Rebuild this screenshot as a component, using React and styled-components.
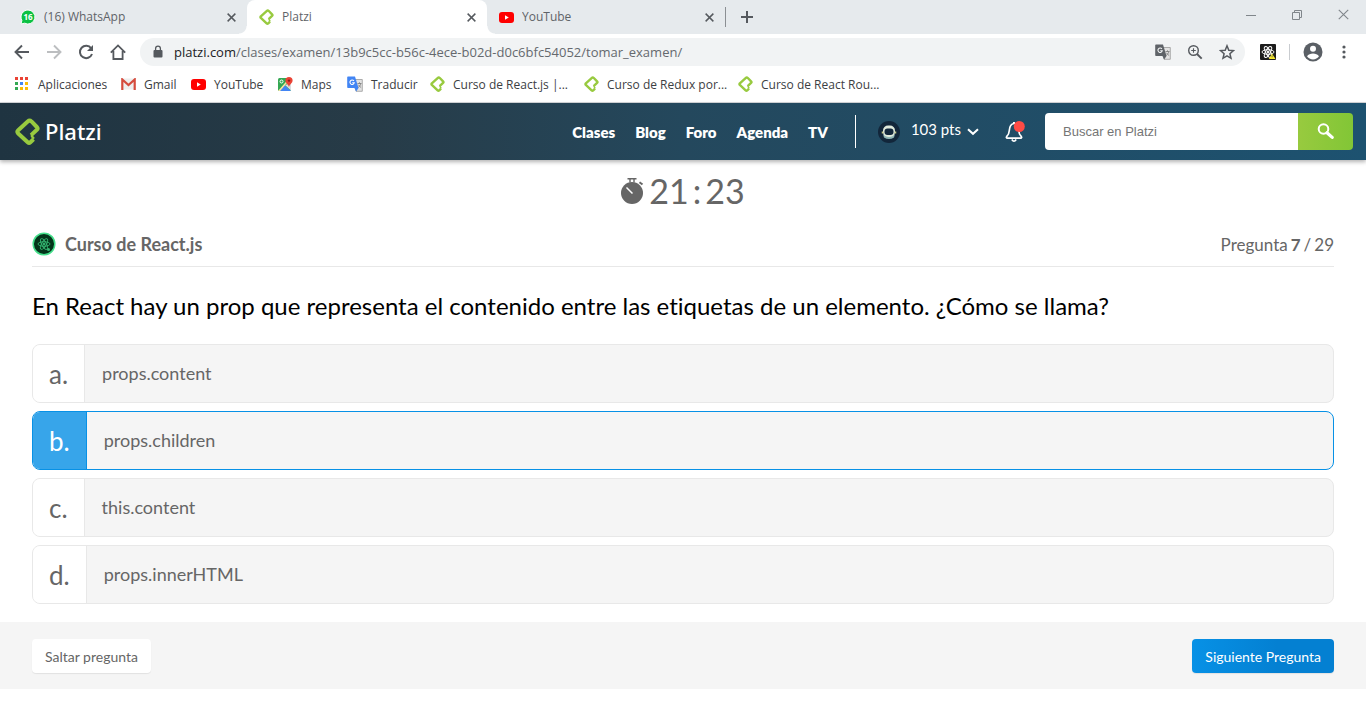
import React, { useState } from "react";
import styled, { createGlobalStyle, css } from "styled-components";

const GlobalStyle = createGlobalStyle`
  *, *::before, *::after { box-sizing: border-box; }
  body {
    margin: 0;
    background: #fff;
    font-family: Lato, "Liberation Sans", sans-serif;
    font-variant-ligatures: none;
  }
  a { color: inherit; text-decoration: none; }
  button, input { font: inherit; }
  button { border: 0; padding: 0; background: none; color: inherit; cursor: pointer; }
  svg { display: block; flex: none; }
`;

/* ---------- Browser window ---------- */

const Browser = styled.header`
  font-family: "Open Sans", "Noto Sans", sans-serif;
  border-bottom: 1px solid #d5d7da;
`;

const TabStrip = styled.div`
  display: flex;
  height: 34px;
  background: #e6eaed;
`;

const Tab = styled.div`
  display: flex;
  align-items: center;
  gap: 8px;
  flex: 0 1 240px;
  min-width: 0;
  padding: 0 8px 0 12px;
  font-size: 12px;
  color: #5f6368;
  ${(p) => p.$first && css`
    flex-basis: 247px;
    padding-left: 20px;
  `}
  ${(p) => p.$last && css`
    flex-basis: 238px;
  `}
  ${(p) => p.$active && css`
    position: relative;
    background: #fff;
    border-radius: 8px 8px 0 0;
    &::before, &::after {
      content: "";
      position: absolute;
      bottom: 0;
      width: 8px;
      height: 8px;
    }
    &::before {
      right: 100%;
      background: radial-gradient(circle at 0 0, transparent 7px, #fff 8px);
    }
    &::after {
      left: 100%;
      background: radial-gradient(circle at 100% 0, transparent 7px, #fff 8px);
    }
  `}
`;

const TabTitle = styled.span`
  flex: 1;
  padding-bottom: 1px;
  overflow: hidden;
  white-space: nowrap;
`;

const TabDivider = styled.span`
  width: 1px;
  height: 20px;
  margin-top: 7px;
  background: #8b8f93;
`;

const StripButton = styled.button`
  display: flex;
  align-items: center;
  justify-content: center;
  width: ${(p) => p.$width || 16}px;
  height: ${(p) => p.$height || 16}px;
  color: ${(p) => p.$color || "#55595e"};
`;

const WindowControls = styled.div`
  display: flex;
  margin-left: auto;
`;

const Toolbar = styled.div`
  display: flex;
  align-items: center;
  height: 36px;
  padding: 0 14px;
  color: #55595e;
`;

const NavButtons = styled.div`
  display: flex;
  gap: 16px;
  margin-right: 14px;
`;

const Address = styled.div`
  display: flex;
  flex: 1;
  align-items: center;
  height: 28px;
  padding: 0 10px 0 12px;
  border-radius: 14px;
  background: #f1f3f4;
`;

const AddressText = styled.span`
  flex: 1;
  margin-left: 10px;
  font-size: 13px;
  color: #65696e;
  white-space: nowrap;
  b { font-weight: 400; color: #202124; }
`;

const AddressActions = styled.div`
  display: flex;
  gap: 16px;
`;

const ToolbarEnd = styled.div`
  display: flex;
  align-items: center;
  gap: 13px;
  margin-left: 15px;
`;

const ToolbarDivider = styled.span`
  width: 1px;
  height: 16px;
  background: #c9ccd0;
`;

const Bookmarks = styled.nav`
  display: flex;
  align-items: center;
  height: 32px;
  padding: 0 0 4px 14px;
  font-size: 12px;
  color: #3c4043;
`;

const Bookmark = styled.a`
  display: flex;
  align-items: center;
  gap: 8px;
  width: ${(p) => p.$width}px;
  white-space: nowrap;
`;

/* ---------- Platzi bar ---------- */

const SiteBar = styled.div`
  display: flex;
  align-items: center;
  height: 57px;
  padding: 0 13px 0 15px;
  background: linear-gradient(90deg, #1f3441 0%, #273b47 27%, #24485d 50%, #1d5270 100%);
  box-shadow: 0 2px 4px rgba(0, 0, 0, 0.3);
  color: #fff;
`;

const Brand = styled.a`
  display: flex;
  align-items: center;
  gap: 5px;
  padding-bottom: 1px;
  font-family: "Noto Sans", sans-serif;
  font-size: 22px;
  line-height: 28px;
  font-weight: 500;
`;

const SiteNav = styled.nav`
  display: flex;
  gap: 20px;
  margin-left: auto;
  padding-top: 1px;
  font-size: 15px;
  font-weight: 800;
`;

const SiteDivider = styled.span`
  width: 1px;
  height: 33px;
  margin: 0 22px 0 27px;
  background: #fff;
`;

const Points = styled.button`
  display: flex;
  align-items: center;
  font-size: 15px;
  span { margin: 0 6px 5px 11px; }
`;

const Bell = styled.button`
  margin: 0 20px 0 26px;
`;

const Search = styled.form`
  display: flex;
  width: 308px;
  height: 37px;
  border-radius: 4px;
  overflow: hidden;
`;

const SearchInput = styled.input`
  flex: 1;
  min-width: 0;
  padding: 0 18px;
  border: 0;
  background: #fff;
  font-family: "Liberation Sans", sans-serif;
  font-size: 13px;
  color: #555;
  &::placeholder { color: #757575; opacity: 1; }
`;

const SearchButton = styled.button`
  display: flex;
  align-items: center;
  justify-content: center;
  width: 55px;
  background: linear-gradient(90deg, #98ca3f, #82c636);
`;

/* ---------- Exam ---------- */

const Exam = styled.main`
  padding: 10px 32px 18px;
  color: #666;
`;

const Timer = styled.div`
  display: flex;
  align-items: center;
  justify-content: center;
  gap: 5px;
  height: 40px;
  font-size: 34px;
`;

const ClockDigits = styled.span`
  display: flex;
  gap: 4px;
`;

const ExamHead = styled.div`
  display: flex;
  align-items: center;
  justify-content: space-between;
  height: 45px;
  margin-top: 12px;
  border-bottom: 1px solid #e8e8e8;
`;

const Course = styled.h1`
  display: flex;
  align-items: center;
  gap: 9px;
  margin: 0;
  font-size: 18px;
  font-weight: 700;
`;

const Progress = styled.div`
  display: flex;
  gap: 3px;
  font-size: 17px;
`;

const Question = styled.h2`
  margin: 23px 0 22px;
  font-size: 24px;
  font-weight: 400;
  line-height: 32px;
  color: #000;
`;

const Options = styled.div`
  display: flex;
  flex-direction: column;
  gap: 8px;
`;

const Option = styled.label`
  display: flex;
  height: 59px;
  border: 1px solid ${(p) => (p.$selected ? "#0791e6" : "#e8e8e8")};
  border-radius: 8px;
  background: #f5f5f5;
  overflow: hidden;
  cursor: pointer;
`;

const Radio = styled.input`
  appearance: none;
  width: 0;
  height: 0;
  margin: 0;
`;

const Letter = styled.span`
  display: flex;
  align-items: center;
  padding: 0 16px;
  border-right: 1px solid ${(p) => (p.$selected ? "#0791e6" : "#e8e8e8")};
  background: ${(p) => (p.$selected ? "#37a5ea" : "#fff")};
  color: ${(p) => (p.$selected ? "#fff" : "#666")};
  font-size: 26px;
`;

const Answer = styled.span`
  display: flex;
  align-items: center;
  padding: 0 17px 2px;
  font-size: 18px;
`;

const Actions = styled.footer`
  display: flex;
  justify-content: space-between;
  align-items: center;
  padding: 17px 32px 16px;
  background: #f5f5f5;
`;

const ActionButton = styled.button`
  height: 34px;
  padding: 0 13px;
  border-radius: 4px;
  font-size: 14px;
  background: ${(p) => (p.$primary ? "linear-gradient(90deg, #0791e6, #0480d2 60%)" : "#fff")};
  color: ${(p) => (p.$primary ? "#fff" : "#666")};
  box-shadow: 0 1px 1px rgba(0, 0, 0, 0.08);
`;

/* ---------- Icons ---------- */

const PlatziMark = ({ width = 15, height = 16 }) => (
  <svg width={width} height={height} viewBox="0 0 24 26" fill="none" stroke="#98ca3f" strokeWidth="3.900" strokeLinejoin="round">
    <path d="M15.500 16.500 L21 11.300 Q22.300 10 21 8.700 L15.800 3.300 Q14 1.700 12.200 3.300 L2.800 12 Q1.700 13.300 2.800 14.600 L12.200 23.300 Q13.500 24.500 14.800 23.300 L17.800 20.500" />
    <path d="M16.200 15.500 L16.200 17.500 L18.200 20" strokeWidth="2.200" />
  </svg>
);

const YouTubeIcon = () => (
  <svg width="15" height="11" viewBox="0 0 15 11">
    <rect width="15" height="11" rx="3" fill="#f00" />
    <path d="M6 3.200v4.600l3.800-2.300z" fill="#fff" />
  </svg>
);

const WhatsAppIcon = () => (
  <svg width="16" height="16" viewBox="0 0 16 16">
    <path d="M8 1a7 7 0 1 1-3.300 13.200L1 15l.9-3.600A7 7 0 0 1 8 1z" fill="#0bc143" stroke="#fff" />
    <text x="8" y="11" textAnchor="middle" fontFamily="Open Sans" fontSize="8" fontWeight="700" fill="#fff">16</text>
  </svg>
);

const CloseIcon = ({ size = 9, stroke = 1.6 }) => (
  <svg width={size} height={size} viewBox="0 0 10 10" fill="none" stroke="currentColor" strokeWidth={stroke}>
    <path d="M.7.7l8.600 8.600M9.300.7L.7 9.300" />
  </svg>
);

const PlusIcon = () => (
  <svg width="12" height="12" viewBox="0 0 12 12" stroke="currentColor" strokeWidth="2"><path d="M6 0v12M0 6h12" /></svg>
);

const ArrowIcon = ({ flip }) => (
  <svg width="16" height="16" viewBox="0 0 16 16" fill="none" stroke={flip ? "#bcbec0" : "currentColor"} strokeWidth="1.900">
    <path d={flip ? "M1 8h13M8 1.500L14.500 8 8 14.500" : "M15 8H2M8 1.500L1.500 8 8 14.500"} />
  </svg>
);

const ReloadIcon = () => (
  <svg width="16" height="16" viewBox="0 0 16 16">
    <path d="M13.200 4.300A6.200 6.200 0 1 0 14 10" fill="none" stroke="currentColor" strokeWidth="2" />
    <path d="M15 1v6H9z" fill="currentColor" />
  </svg>
);

const HomeIcon = () => (
  <svg width="16" height="16" viewBox="0 0 16 16" fill="none" stroke="currentColor" strokeWidth="1.800">
    <path d="M.8 8.600L8 1.400l7.200 7.200M3.400 7v8h9.200V7" />
  </svg>
);

const LockIcon = () => (
  <svg width="12" height="14" viewBox="0 0 12 14">
    <rect x="1.500" y="5" width="9" height="7.500" rx="1" fill="currentColor" />
    <path d="M3.600 5V3.500a2.400 2.400 0 0 1 4.800 0V5" fill="none" stroke="currentColor" strokeWidth="1.300" />
  </svg>
);

const TranslateIcon = ({ front = "#4285f4", ink = "#fff" }) => (
  <svg width="16" height="16" viewBox="0 0 16 16">
    <path d="M6 3.500h9.300v11.800H9z" fill="#e3e3e3" stroke="#9a9a9a" strokeWidth=".8" />
    <path d="M1 .5h7l3.500 11.500H1a.8.8 0 0 1-.8-.8V1.300A.8.8 0 0 1 1 .5z" fill={front} />
    <path d="M7.500 12h4l-2.300 3.400z" fill={front} />
    <path d="M6.900 4.900A2.200 2.200 0 1 0 7.300 6.700H5.200" fill="none" stroke={ink} strokeWidth="1.100" />
    <path d="M10.500 7.500h4M12.500 6.300v1.200M13.700 7.500c-.2 1.800-1.200 3-2.400 3.900M11.500 8.800c.6 1.300 1.500 2 2.600 2.700" fill="none" stroke="#777" strokeWidth=".8" />
  </svg>
);

const ZoomIcon = () => (
  <svg width="16" height="16" viewBox="0 0 16 16" fill="none" stroke="currentColor" strokeWidth="1.400">
    <circle cx="6.500" cy="6.500" r="4.800" />
    <path d="M10 10l4.700 4.700" strokeWidth="1.900" />
    <path d="M4.200 6.500h4.600M6.500 4.200v4.600" strokeWidth="1.100" />
  </svg>
);

const StarIcon = () => (
  <svg width="16" height="16" viewBox="0 0 16 16" fill="none" stroke="currentColor" strokeWidth="1.500">
    <path d="M8 1.800l1.800 4.400 4.700.4-3.600 3.100 1.100 4.600L8 11.900l-4 2.400 1.100-4.600-3.600-3.100 4.700-.4z" />
  </svg>
);

const Atom = ({ color, width }) => (
  <g fill="none" stroke={color} strokeWidth={width}>
    <ellipse cx="8" cy="8" rx="6" ry="2.300" />
    <ellipse cx="8" cy="8" rx="6" ry="2.300" transform="rotate(60 8 8)" />
    <ellipse cx="8" cy="8" rx="6" ry="2.300" transform="rotate(120 8 8)" />
    <circle cx="8" cy="8" r="1" fill={color} />
  </g>
);

const ReactExtIcon = () => (
  <svg width="16" height="16" viewBox="0 0 16 16">
    <rect width="16" height="16" rx="1" fill="#1c1c1c" />
    <Atom color="#fff" width="1" />
    <path d="M12 9.500l3.500 5.500H8.800z" fill="#f7e92d" />
    <path d="M12.100 11.300v2" stroke="#555" strokeWidth=".8" />
  </svg>
);

const ProfileIcon = () => (
  <svg width="20" height="20" viewBox="0 0 20 20">
    <circle cx="10" cy="10" r="9.500" fill="#5a5f65" />
    <circle cx="10" cy="6.800" r="3" fill="#fff" />
    <path d="M4 14.200c1.300-2 3.500-2.800 6-2.800s4.700.8 6 2.800a7.200 7.200 0 0 1-12 0z" fill="#fff" />
  </svg>
);

const MoreIcon = () => (
  <svg width="16" height="16" viewBox="0 0 16 16" fill="currentColor">
    <circle cx="8" cy="3" r="1.600" /><circle cx="8" cy="8" r="1.600" /><circle cx="8" cy="13" r="1.600" />
  </svg>
);

const gridColors = ["#ea4335", "#ea4335", "#ea4335", "#34a853", "#4285f4", "#fbbc05", "#34a853", "#fbbc05", "#fbbc05"];
const AppsIcon = () => (
  <svg width="16" height="14" viewBox="0 0 16 14">
    {gridColors.map((c, i) => (
      <rect key={i} x={1 + (i % 3) * 5} y={Math.floor(i / 3) * 5} width="3" height="3" fill={c} />
    ))}
  </svg>
);

const GmailIcon = () => (
  <svg width="15" height="12" viewBox="0 0 15 12">
    <rect x="1" y=".5" width="13" height="11" fill="#eee" />
    <path d="M1.300 12V1.500L7.500 7l6.200-5.500V12" fill="none" stroke="#d54b3d" strokeWidth="2.200" />
  </svg>
);

const MapsIcon = () => (
  <svg width="15" height="14" viewBox="0 0 15 14">
    <rect y="1" width="13" height="13" rx="1.500" fill="#34a853" />
    <path d="M6.500 8L13 14H1.500z" fill="#4285f4" />
    <path d="M1 14L11 2.500" stroke="#fbe4a0" strokeWidth="1.600" />
    <path d="M7 8l6 5.500V6z" fill="#dadce0" />
    <circle cx="3.500" cy="4.500" r="1.500" fill="none" stroke="#fff" />
    <path d="M11 0a3.600 3.600 0 0 1 3.600 3.600c0 2.500-2.600 3.400-3.600 6.400-1-3-3.600-3.900-3.600-6.400A3.600 3.600 0 0 1 11 0z" fill="#ea4335" />
    <circle cx="11" cy="3.600" r="1.200" fill="#8c1d18" />
  </svg>
);

const Astronaut = () => (
  <svg width="22" height="22" viewBox="0 0 22 22">
    <circle cx="11" cy="11" r="11" fill="#12263a" />
    <path d="M5 13q6 5 12 0l-1 3.500q-5 3-10 0z" fill="#8fb5b5" />
    <rect x="5" y="4.500" width="12" height="11.500" rx="5" fill="#dfe9dc" />
    <path d="M4.500 10.500v2M17.500 10.500v2" stroke="#c8c98a" strokeWidth="1.500" />
    <rect x="6.500" y="7.500" width="9" height="6.500" rx="3" fill="#12263a" />
  </svg>
);

const CaretIcon = () => (
  <svg width="12" height="8" viewBox="0 0 12 8" fill="none" stroke="#fff" strokeWidth="2"><path d="M1 1.200l5 4.600 5-4.600" /></svg>
);

const BellIcon = () => (
  <svg width="20" height="22" viewBox="0 0 20 22">
    <path d="M9 2.500C5 3 4.500 6.500 4.300 9.500c-.2 3-.9 4.500-2.600 6-.6.600-.4 1.700.6 1.700h13.400c1 0 1.200-1.100.6-1.700-1.700-1.500-2.400-3-2.600-6" fill="none" stroke="#fff" strokeWidth="1.700" />
    <path d="M6.800 18.500q2.200 3.500 4.400 0" fill="none" stroke="#fff" strokeWidth="1.600" />
    <path d="M9 1v2" stroke="#fff" strokeWidth="2" />
    <circle cx="14.300" cy="5.500" r="5.500" fill="#ff4b45" />
  </svg>
);

const SearchIcon = () => (
  <svg width="17" height="17" viewBox="0 0 17 17" fill="none" stroke="#fff">
    <circle cx="6.500" cy="6" r="4.800" strokeWidth="2" />
    <path d="M10 9.800l5.200 4.600" strokeWidth="3.200" strokeLinecap="round" />
  </svg>
);

const StopwatchIcon = () => (
  <svg width="23" height="27" viewBox="0 0 23 27">
    <circle cx="11" cy="16" r="11" fill="#666" />
    <path d="M6.500 1.700h9M9 1.500v4M13 1.500v4" stroke="#666" strokeWidth="1.400" />
    <path d="M18.500 5.200l3 2.300" stroke="#666" strokeWidth="2" />
    <path d="M5.500 10.500l6 6" stroke="#fff" strokeWidth="1.500" />
  </svg>
);

const CourseIcon = () => (
  <svg width="24" height="24" viewBox="0 0 24 24">
    <circle cx="12" cy="12" r="10.800" fill="#04351a" stroke="#45e08c" strokeWidth="1.500" />
    <g transform="translate(4 4)"><Atom color="#35b873" width=".9" /></g>
    <circle cx="16.500" cy="17.500" r="1.500" fill="#35b873" />
  </svg>
);

/* ---------- Page ---------- */

const bookmarks = [
  ["Aplicaciones", 107, <AppsIcon />],
  ["Gmail", 70, <GmailIcon />],
  ["YouTube", 87, <YouTubeIcon />],
  ["Maps", 69, <MapsIcon />],
  ["Traducir", 83, <TranslateIcon />],
  ["Curso de React.js |...", 154, <PlatziMark />],
  ["Curso de Redux por...", 154, <PlatziMark />],
  ["Curso de React Rou...", 154, <PlatziMark />],
];

const tabs = [
  { title: "(16) WhatsApp", icon: <WhatsAppIcon />, first: true },
  { title: "Platzi", icon: <PlatziMark />, active: true },
  { title: "YouTube", icon: <YouTubeIcon />, last: true },
];

const answers = [
  ["a", "props.content"],
  ["b", "props.children"],
  ["c", "this.content"],
  ["d", "props.innerHTML"],
];

export default function App() {
  const [selected, setSelected] = useState("b");
  return (
    <>
      <GlobalStyle />
      <Browser>
        <TabStrip>
          {tabs.map((t) => (
            <Tab key={t.title} $first={t.first} $active={t.active} $last={t.last}>
              {t.icon}
              <TabTitle>{t.title}</TabTitle>
              <StripButton aria-label="Cerrar pestaña"><CloseIcon /></StripButton>
            </Tab>
          ))}
          <TabDivider />
          <StripButton $width={42} $height={34} aria-label="Nueva pestaña"><PlusIcon /></StripButton>
          <WindowControls>
            <StripButton $width={46} $height={29} $color="#80868b" aria-label="Minimizar">
              <svg width="10" height="10" viewBox="0 0 10 10" stroke="currentColor"><path d="M0 5.500h10" /></svg>
            </StripButton>
            <StripButton $width={46} $height={29} $color="#80868b" aria-label="Restaurar">
              <svg width="10" height="10" viewBox="0 0 10 10" fill="none" stroke="currentColor"><path d="M.5 2.500h7v7h-7zM2.500 2.500v-2h7v7h-2" /></svg>
            </StripButton>
            <StripButton $width={46} $height={29} $color="#80868b" aria-label="Cerrar"><CloseIcon size={11} stroke={1} /></StripButton>
          </WindowControls>
        </TabStrip>
        <Toolbar>
          <NavButtons>
            <StripButton aria-label="Atrás"><ArrowIcon /></StripButton>
            <StripButton aria-label="Adelante"><ArrowIcon flip /></StripButton>
            <StripButton aria-label="Recargar"><ReloadIcon /></StripButton>
            <StripButton aria-label="Inicio"><HomeIcon /></StripButton>
          </NavButtons>
          <Address>
            <LockIcon />
            <AddressText><b>platzi.com</b>/clases/examen/13b9c5cc-b56c-4ece-b02d-d0c6bfc54052/tomar_examen/</AddressText>
            <AddressActions>
              <StripButton aria-label="Traducir página"><TranslateIcon front="#5f6368" ink="#f1f3f4" /></StripButton>
              <StripButton aria-label="Zoom"><ZoomIcon /></StripButton>
              <StripButton aria-label="Favorito"><StarIcon /></StripButton>
            </AddressActions>
          </Address>
          <ToolbarEnd>
            <StripButton aria-label="React DevTools"><ReactExtIcon /></StripButton>
            <ToolbarDivider />
            <StripButton $width={20} $height={20} aria-label="Perfil"><ProfileIcon /></StripButton>
            <StripButton aria-label="Más"><MoreIcon /></StripButton>
          </ToolbarEnd>
        </Toolbar>
        <Bookmarks>
          {bookmarks.map(([label, width, icon]) => (
            <Bookmark key={label} href="#" $width={width}>{icon}{label}</Bookmark>
          ))}
        </Bookmarks>
      </Browser>

      <SiteBar>
        <Brand href="#"><PlatziMark width={25} height={27} />Platzi</Brand>
        <SiteNav>
          {["Clases", "Blog", "Foro", "Agenda", "TV"].map((l) => <a key={l} href="#">{l}</a>)}
        </SiteNav>
        <SiteDivider />
        <Points><Astronaut /><span>103 pts</span><CaretIcon /></Points>
        <Bell aria-label="Notificaciones"><BellIcon /></Bell>
        <Search onSubmit={(e) => e.preventDefault()}>
          <SearchInput aria-label="Buscar en Platzi" placeholder="Buscar en Platzi" />
          <SearchButton aria-label="Buscar"><SearchIcon /></SearchButton>
        </Search>
      </SiteBar>

      <Exam>
        <Timer>
          <StopwatchIcon />
          <ClockDigits><span>21</span><span>:</span><span>23</span></ClockDigits>
        </Timer>
        <ExamHead>
          <Course><CourseIcon />Curso de React.js</Course>
          <Progress><span>Pregunta</span><b>7</b><span>/</span><span>29</span></Progress>
        </ExamHead>
        <Question>En React hay un prop que representa el contenido entre las etiquetas de un elemento. ¿Cómo se llama?</Question>
        <Options>
          {answers.map(([key, text]) => (
            <Option key={key} $selected={selected === key}>
              <Radio type="radio" name="answer" checked={selected === key} onChange={() => setSelected(key)} />
              <Letter $selected={selected === key}>{key}.</Letter>
              <Answer>{text}</Answer>
            </Option>
          ))}
        </Options>
      </Exam>
      <Actions>
        <ActionButton>Saltar pregunta</ActionButton>
        <ActionButton $primary>Siguiente Pregunta</ActionButton>
      </Actions>
    </>
  );
}
